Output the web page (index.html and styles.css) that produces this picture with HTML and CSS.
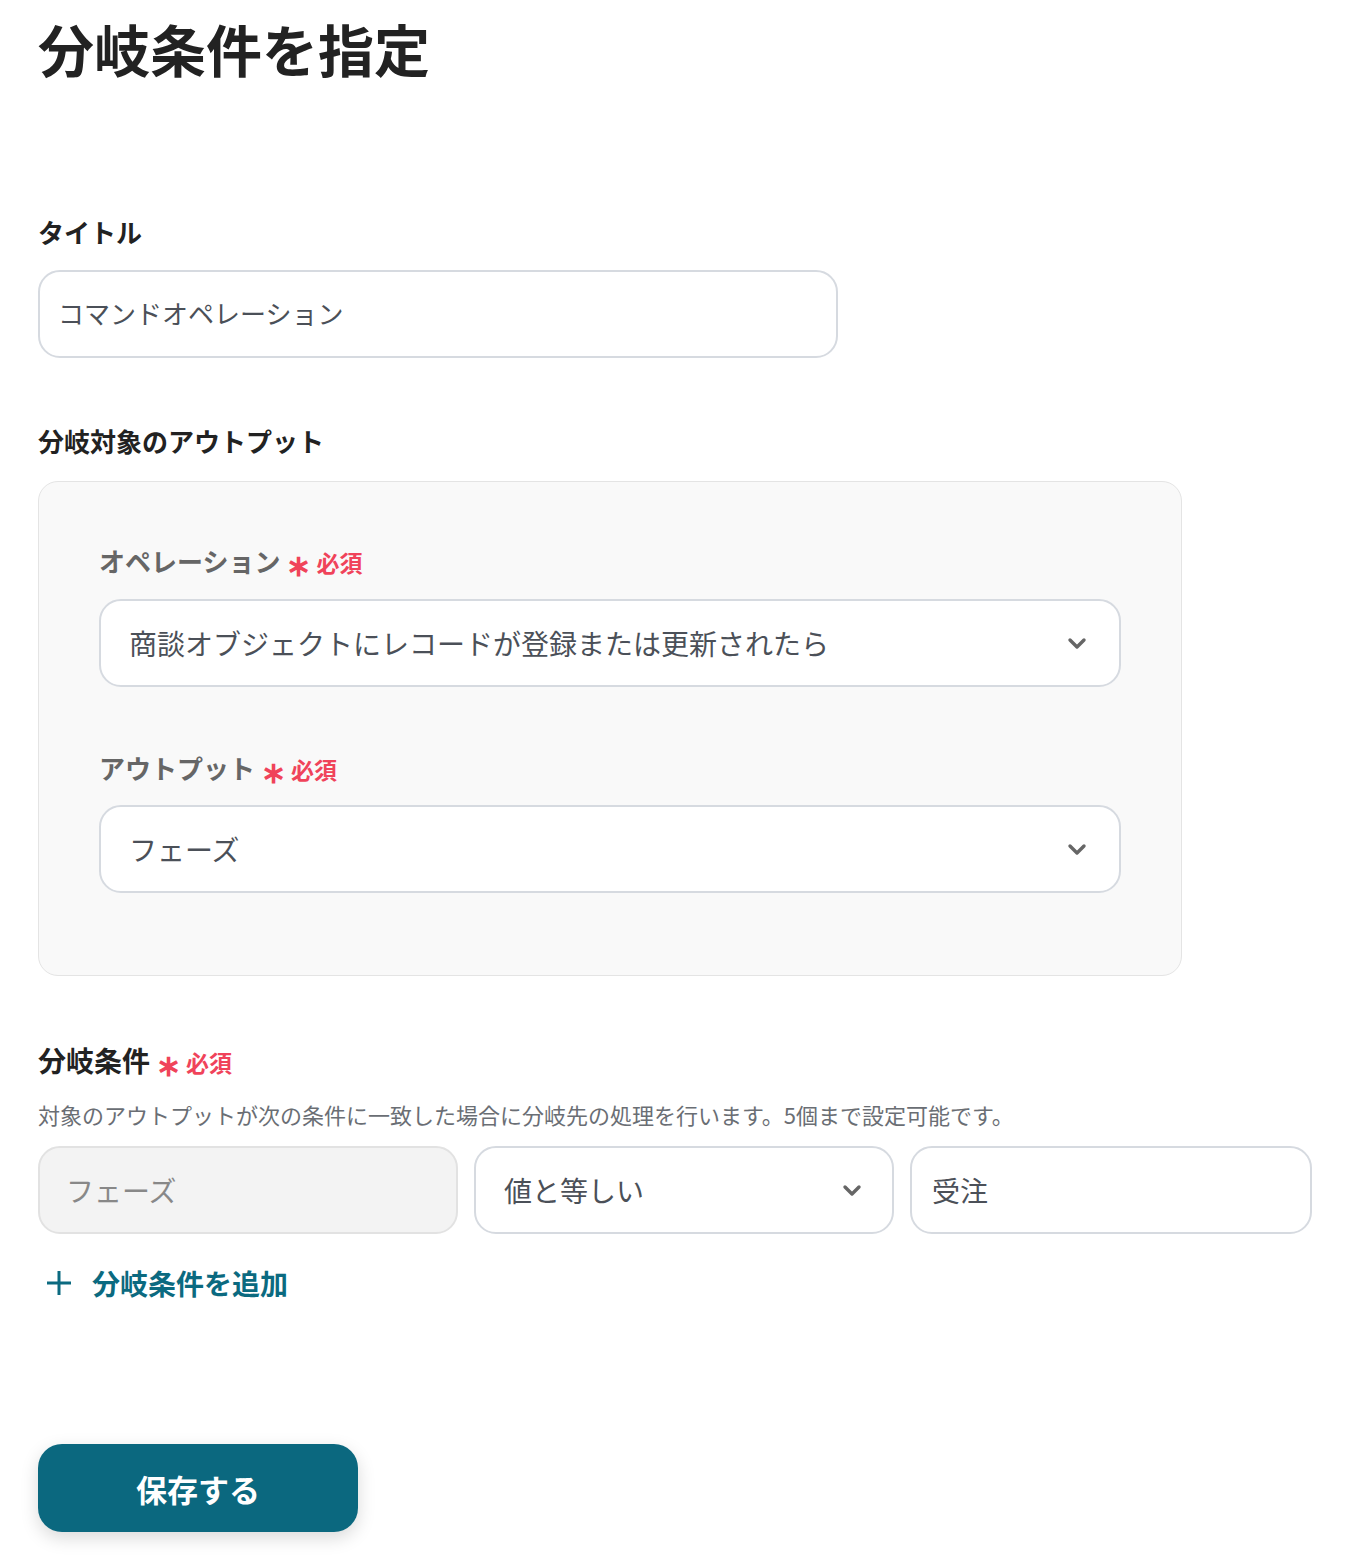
FILE: index.html
```html
<!DOCTYPE html>
<html lang="ja">
<head>
    <meta charset="UTF-8">
    <meta name="viewport" content="width=device-width, initial-scale=1.0">
    <title>分岐条件を指定</title>
    <link rel="stylesheet" href="styles.css">
</head>
<body>
    <div class="page">
        <h1 class="page-title">分岐条件を指定</h1>

        <!-- タイトル -->
        <div class="field-label title-label">タイトル</div>
        <div class="text-input wide">コマンドオペレーション</div>

        <!-- 分岐対象のアウトプット -->
        <div class="field-label target-label">分岐対象のアウトプット</div>
        <div class="target-box">
            <div class="sub-label">オペレーション<span class="required"><span class="star">∗</span>必須</span></div>
            <div class="select-box">
                <span>商談オブジェクトにレコードが登録または更新されたら</span>
                <svg class="chevron" viewBox="0 0 24 24"><path d="M5 9l7 7 7-7"/></svg>
            </div>
            <div class="sub-label second">アウトプット<span class="required"><span class="star">∗</span>必須</span></div>
            <div class="select-box">
                <span>フェーズ</span>
                <svg class="chevron" viewBox="0 0 24 24"><path d="M5 9l7 7 7-7"/></svg>
            </div>
        </div>

        <!-- 分岐条件 -->
        <div class="field-label cond-label">分岐条件<span class="required"><span class="star">∗</span>必須</span></div>
        <p class="cond-note">対象のアウトプットが次の条件に一致した場合に分岐先の処理を行います。5個まで設定可能です。</p>
        <div class="cond-row">
            <div class="text-input disabled">フェーズ</div>
            <div class="select-box small">
                <span>値と等しい</span>
                <svg class="chevron" viewBox="0 0 24 24"><path d="M5 9l7 7 7-7"/></svg>
            </div>
            <div class="text-input value">受注</div>
        </div>

        <a href="#" class="add-link">
            <svg class="plus" viewBox="0 0 26 26"><path d="M13 1v24M1 13h24"/></svg>
            分岐条件を追加
        </a>

        <button type="button" class="save-btn">保存する</button>
    </div>
</body>
</html>
```

FILE: styles.css
```css
body {
    margin: 0;
    background: #fff;
    font-family: "Noto Sans CJK JP", "Noto Sans", sans-serif;
    color: #222;
}

.page {
    padding: 8px 38px 30px;
    display: flex;
    flex-direction: column;
    align-items: flex-start;
}

.page-title {
    margin: 0;
    font-size: 56px;
    line-height: 80px;
    font-weight: 700;
    color: #222;
}

.field-label {
    font-size: 26px;
    line-height: 40px;
    font-weight: 700;
    color: #222;
}

.title-label {
    margin-top: 124px;
}

.target-label {
    margin-top: 63px;
}

.cond-label {
    margin-top: 64px;
    font-size: 28px;
}

.required {
    color: #f0435a;
    font-size: 23px;
    line-height: 0;
    margin-left: 6px;
    font-weight: 700;
}

.star {
    font-size: 30px;
    line-height: 0;
    font-weight: 700;
    margin-right: 5px;
    position: relative;
    top: 4px;
}

.text-input,
.select-box {
    box-sizing: border-box;
    height: 88px;
    border: 2px solid #d6dae0;
    border-radius: 22px;
    background: #fff;
    font-size: 26px;
    color: #4b5058;
    display: flex;
    align-items: center;
}

.text-input {
    padding-left: 20px;
}

.text-input.wide {
    width: 800px;
    margin-top: 18px;
    padding-left: 18px;
    padding-bottom: 4px;
}

.target-box {
    box-sizing: border-box;
    width: 1144px;
    margin-top: 20px;
    padding: 59px 60px 82px;
    background: #f9f9f9;
    border: 1px solid #e4e4e4;
    border-radius: 20px;
}

.sub-label {
    font-size: 26px;
    line-height: 40px;
    font-weight: 700;
    color: #666;
    margin-bottom: 18px;
}

.sub-label.second {
    margin-top: 61px;
    margin-bottom: 17px;
}

.select-box {
    width: 100%;
    padding: 0 30px 0 28px;
    font-size: 28px;
    justify-content: space-between;
}

.chevron {
    width: 24px;
    height: 24px;
    fill: none;
    stroke: #666;
    stroke-width: 3.4;
    stroke-linecap: round;
    stroke-linejoin: round;
}

.cond-note {
    margin: 18px 0 0;
    font-size: 22px;
    line-height: 32px;
    color: #6a6e74;
}

.cond-row {
    display: flex;
    gap: 16px;
    margin-top: 16px;
}

.cond-row .text-input,
.cond-row .select-box {
    font-size: 28px;
}

.text-input.disabled {
    width: 420px;
    padding-left: 26px;
    background: #f3f3f3;
    border-color: #e2e2e2;
    color: #888;
}

.select-box.small {
    width: 420px;
    padding-left: 28px;
    padding-right: 28px;
}

.text-input.value {
    width: 402px;
}

.add-link {
    margin-top: 29px;
    display: flex;
    align-items: center;
    gap: 20px;
    padding-left: 8px;
    font-size: 28px;
    line-height: 40px;
    font-weight: 700;
    color: #0b6a80;
    text-decoration: none;
}

.plus {
    width: 26px;
    height: 26px;
    fill: none;
    stroke: #0b6a80;
    stroke-width: 3;
}

.save-btn {
    margin-top: 141px;
    width: 320px;
    height: 88px;
    border: none;
    border-radius: 24px;
    background: #0b687f;
    color: #fff;
    font-family: inherit;
    font-size: 31px;
    font-weight: 700;
    box-shadow: 0 6px 18px rgba(0, 0, 0, 0.15);
    cursor: pointer;
}
```
